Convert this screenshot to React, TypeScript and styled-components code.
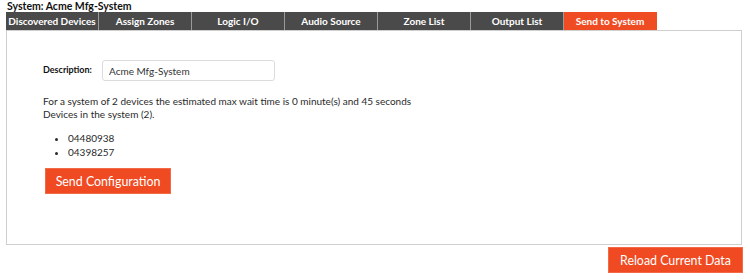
import styled, { createGlobalStyle } from 'styled-components';
import React from 'react';

const Global = createGlobalStyle`
  html, body {
    margin: 0;
    padding: 0;
    background: #fff;
    font-family: Lato, "Open Sans", sans-serif;
    color: #222;
  }
`;

const Page = styled.div`
  width: 750px;
  display: flex;
  flex-direction: column;
`;

const Title = styled.div`
  font-weight: 700;
  font-size: 10.5px;
  line-height: 12px;
  height: 12px;
  padding: 0 0 0 7px;
  color: #111;
`;

const Tabs = styled.nav`
  display: flex;
  margin-left: 6px;
  height: 18px;
`;

const Tab = styled.div<{ $active?: boolean }>`
  width: 92px;
  border-right: 1px solid ${p => (p.$active ? '#f04c24' : '#9a9a9a')};
  background: ${p => (p.$active ? '#f04c24' : '#4a4a4a')};
  color: #fff;
  font-weight: 700;
  font-size: 10px;
  display: flex;
  align-items: center;
  justify-content: center;
  white-space: nowrap;
`;

const Panel = styled.section`
  margin-left: 6px;
  width: 736px;
  border: 1px solid #cfcfcf;
  padding: 29px 0 0 36px;
  box-sizing: border-box;
  height: 215px;
  display: flex;
  flex-direction: column;
`;

const Field = styled.div`
  display: flex;
  align-items: center;
  gap: 10px;
`;

const Label = styled.label`
  font-weight: 700;
  font-size: 9px;
  color: #111;
  width: 49px;
  margin-top: -2px;
  white-space: nowrap;
`;

const Input = styled.input`
  width: 173px;
  height: 21px;
  box-sizing: border-box;
  border: 1px solid #dcdcdc;
  border-radius: 3px;
  padding: 0 6px;
  font-family: inherit;
  font-size: 10px;
  color: #333;
  outline: none;
`;

const Info = styled.p`
  margin: 14px 0 0;
  font-size: 10px;
  line-height: 13px;
  color: #2a2a2a;
`;

const DeviceList = styled.ul`
  margin: 10px 0 0;
  padding-left: 25px;
  font-size: 10px;
  line-height: 14px;
  color: #2a2a2a;
`;

const OrangeButton = styled.button`
  background: #f04a22;
  color: #fff;
  border: 1px solid #f26a46;
  font-family: inherit;
  font-size: 12.4px;
  padding: 0;
  height: 26px;
  cursor: pointer;
`;

const SendButton = styled(OrangeButton)`
  align-self: flex-start;
  width: 126px;
  margin: 9px 0 0 2px;
`;

const Footer = styled.div`
  display: flex;
  justify-content: flex-end;
  padding-right: 7px;
  margin-top: 2px;
`;

const ReloadButton = styled(OrangeButton)`
  width: 135px;
`;

const tabs = [
  'Discovered Devices',
  'Assign Zones',
  'Logic I/O',
  'Audio Source',
  'Zone List',
  'Output List',
  'Send to System',
];

export default function App() {
  return (
    <Page>
      <Global />
      <Title>System: Acme Mfg-System</Title>
      <Tabs>
        {tabs.map(t => (
          <Tab key={t} $active={t === 'Send to System'}>
            {t}
          </Tab>
        ))}
      </Tabs>
      <Panel>
        <Field>
          <Label>Description:</Label>
          <Input defaultValue="Acme Mfg-System" />
        </Field>
        <Info>
          For a system of 2 devices the estimated max wait time is 0 minute(s) and 45 seconds
          <br />
          Devices in the system (2).
        </Info>
        <DeviceList>
          <li>04480938</li>
          <li>04398257</li>
        </DeviceList>
        <SendButton>Send Configuration</SendButton>
      </Panel>
      <Footer>
        <ReloadButton>Reload Current Data</ReloadButton>
      </Footer>
    </Page>
  );
}
